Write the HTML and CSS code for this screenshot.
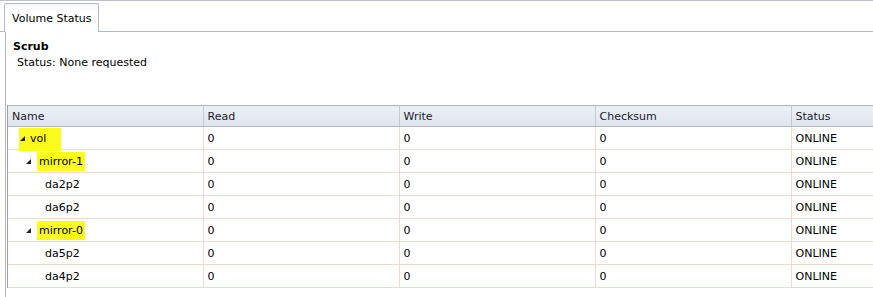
FILE: index.html
```html
<!DOCTYPE html>
<html lang="en">
<head>
    <meta charset="UTF-8">
    <title>Volume Status</title>
    <link rel="stylesheet" href="styles.css">
</head>
<body>
    <div class="window">
        <div class="tab-strip">
            <div class="tab">Volume Status</div>
        </div>
        <div class="panel">
            <div class="scrub">
                <div class="scrub-title">Scrub</div>
                <div class="scrub-status">Status: None requested</div>
            </div>
            <div class="grid-wrap">
                <table class="grid">
                    <colgroup>
                        <col class="col-name">
                        <col class="col-num">
                        <col class="col-num">
                        <col class="col-num">
                        <col class="col-status">
                    </colgroup>
                    <thead>
                        <tr>
                            <th>Name</th>
                            <th>Read</th>
                            <th>Write</th>
                            <th>Checksum</th>
                            <th>Status</th>
                        </tr>
                    </thead>
                    <tbody>
                        <tr>
                            <td class="lvl-0"><span class="marker marker-vol"><span class="expander"></span>vol</span></td>
                            <td>0</td><td>0</td><td>0</td><td>ONLINE</td>
                        </tr>
                        <tr>
                            <td class="lvl-1"><span class="expander"></span><span class="marker marker-m1">mirror-1</span></td>
                            <td>0</td><td>0</td><td>0</td><td>ONLINE</td>
                        </tr>
                        <tr>
                            <td class="lvl-2">da2p2</td>
                            <td>0</td><td>0</td><td>0</td><td>ONLINE</td>
                        </tr>
                        <tr>
                            <td class="lvl-2">da6p2</td>
                            <td>0</td><td>0</td><td>0</td><td>ONLINE</td>
                        </tr>
                        <tr>
                            <td class="lvl-1"><span class="expander"></span><span class="marker marker-m0">mirror-0</span></td>
                            <td>0</td><td>0</td><td>0</td><td>ONLINE</td>
                        </tr>
                        <tr>
                            <td class="lvl-2">da5p2</td>
                            <td>0</td><td>0</td><td>0</td><td>ONLINE</td>
                        </tr>
                        <tr>
                            <td class="lvl-2">da4p2</td>
                            <td>0</td><td>0</td><td>0</td><td>ONLINE</td>
                        </tr>
                    </tbody>
                </table>
            </div>
        </div>
    </div>
</body>
</html>
```

FILE: styles.css
```css
body {
    margin: 0;
    padding: 0;
    font-family: "DejaVu Sans", Verdana, sans-serif;
    font-size: 11px;
    color: #000;
    background-color: #fff;
    overflow: hidden;
}
.window {
    border-top: 1px solid #bcc0c8;
    height: 296px;
    overflow: hidden;
}
.tab-strip {
    display: flex;
    padding: 2px 0 0 4px;
    border-bottom: 1px solid #b4b8c2;
    height: 28px;
    box-sizing: content-box;
}
.tab {
    border: 1px solid #b4b8c2;
    border-bottom: none;
    border-radius: 2px 2px 0 0;
    background: linear-gradient(#f4f6f9, #fff 30%);
    padding: 8px 7px 0 7px;
    height: 20px;
    margin-bottom: -1px;
    background-color: #fff;
}
.panel {
    margin-left: 5px;
    border-left: 1px solid #b4b8c2;
    height: 265px;
}
.scrub {
    padding: 8px 0 0 7px;
    height: 65px;
}
.scrub-title {
    font-weight: bold;
    line-height: 14px;
}
.scrub-status {
    padding-left: 4px;
    line-height: 18px;
}
.grid-wrap {
    width: 900px;
    margin-left: 1px;
    border-left: 1px solid #9ea3ab;
}
.grid {
    border-collapse: collapse;
    table-layout: fixed;
    width: 898px;
}
.col-name { width: 195px; }
.col-num { width: 196px; }
.col-status { width: 115px; }
.grid th {
    text-align: left;
    font-weight: normal;
    height: 20px;
    padding: 0 4px;
    border-top: 1px solid #b4b8c2;
    border-bottom: 1px solid #b4b8c2;
    border-right: 1px solid #c6cbd3;
    background: linear-gradient(#edf1f6, #dde4ec);
    color: #1a1a2e;
}
.grid td {
    height: 22px;
    padding: 0 4px;
    border-bottom: 1px solid #ecdccf;
    border-right: 1px solid #ecdccf;
    white-space: nowrap;
}
.grid td.lvl-0 { padding-left: 11px; }
.grid td.lvl-1 { padding-left: 18px; }
.grid td.lvl-2 { padding-left: 37px; }
.expander {
    display: inline-block;
    width: 0;
    height: 0;
    border-left: 5px solid transparent;
    border-bottom: 5px solid #222;
    margin-right: 6px;
    vertical-align: 1px;
}
.marker {
    background-color: #fbfb1e;
}
.marker-vol {
    padding: 4px 15px 6px 1px;
}
.marker-vol .expander {
    margin-right: 5px;
}
.marker-m1,
.marker-m0 {
    padding: 3px 2px 3px 2px;
}
```
